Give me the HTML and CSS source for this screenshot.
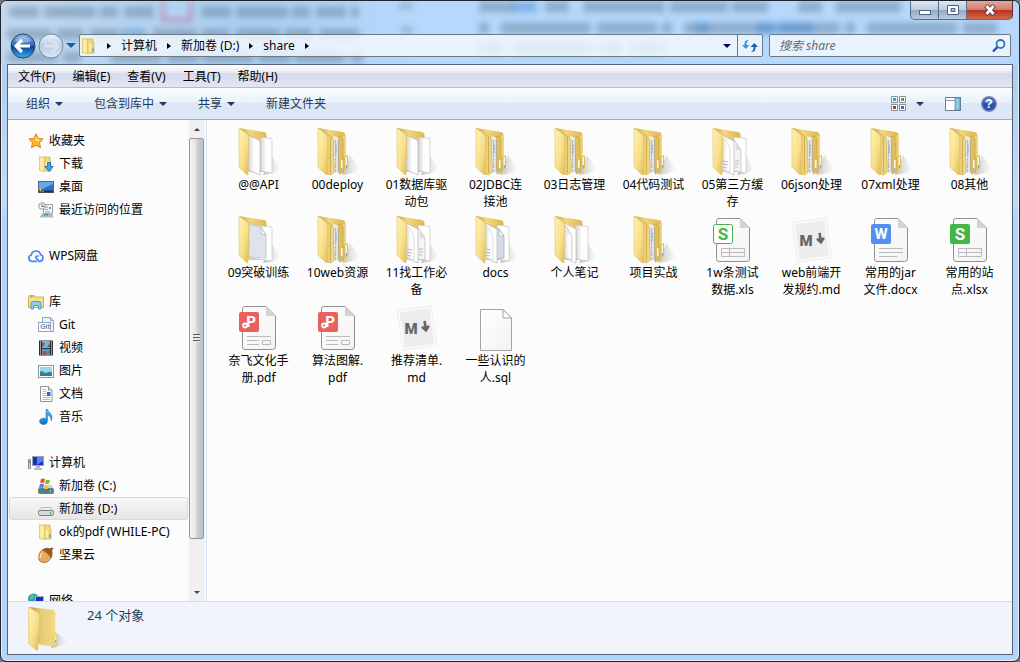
FILE: index.html
```html
<!DOCTYPE html>
<html lang="zh-CN">
<head>
    <meta charset="UTF-8">
    <meta name="viewport" content="width=device-width, initial-scale=1.0">
    <title>share</title>
    <link rel="stylesheet" href="styles.css">
</head>
<body>
<svg class="defs" aria-hidden="true">
    <defs>
        <linearGradient id="gold" x1="0" y1="0" x2="1" y2="1">
            <stop offset="0" stop-color="#fff3b8"/><stop offset=".55" stop-color="#f8e08a"/><stop offset="1" stop-color="#e3b94d"/>
        </linearGradient>
        <linearGradient id="gold-dark" x1="0" y1="0" x2="1" y2="0">
            <stop offset="0" stop-color="#c9a548"/><stop offset=".4" stop-color="#f2d77c"/><stop offset="1" stop-color="#dcb850"/>
        </linearGradient>
        <linearGradient id="gold-soft" x1="0" y1="0" x2="1" y2="0">
            <stop offset="0" stop-color="#b8975a"/><stop offset=".45" stop-color="#e6cb7a"/><stop offset="1" stop-color="#f5dc82"/>
        </linearGradient>
        <linearGradient id="paper" x1="0" y1="0" x2="1" y2="0">
            <stop offset="0" stop-color="#d0d0d0"/><stop offset=".5" stop-color="#fdfdfd"/><stop offset="1" stop-color="#fff"/>
        </linearGradient>
        <linearGradient id="shade" x1="0" y1="0" x2="1" y2="0">
            <stop offset="0" stop-color="#888" stop-opacity=".5"/><stop offset="1" stop-color="#aaa" stop-opacity="0"/>
        </linearGradient>
        <linearGradient id="sheet" x1="0" y1="0" x2="1" y2="1">
            <stop offset="0" stop-color="#fff"/><stop offset="1" stop-color="#f2f2f2"/>
        </linearGradient>
        <linearGradient id="blue" x1="0" y1="0" x2="0" y2="1">
            <stop offset="0" stop-color="#5fc2f2"/><stop offset="1" stop-color="#0f6fc4"/>
        </linearGradient>
        <linearGradient id="orb" x1="0" y1="0" x2="0" y2="1">
            <stop offset="0" stop-color="#8fb3e4"/><stop offset=".48" stop-color="#2f66b8"/><stop offset=".5" stop-color="#0b3a94"/><stop offset="1" stop-color="#35b4f4"/>
        </linearGradient>
        <linearGradient id="orb-off" x1="0" y1="0" x2="0" y2="1">
            <stop offset="0" stop-color="#eef4fb"/><stop offset=".5" stop-color="#b9cce2"/><stop offset="1" stop-color="#dce9f8"/>
        </linearGradient>
        <linearGradient id="glass-left" x1="0" y1="0" x2="1" y2="0">
            <stop offset="0" stop-color="#c3d9f1"/><stop offset=".6" stop-color="#abcff3"/><stop offset="1" stop-color="#b5d8fc"/>
        </linearGradient>
        <filter id="soft" x="-5%" y="-50%" width="110%" height="200%"><feGaussianBlur stdDeviation="3"/></filter>
    </defs>

    <!-- folders, 48x48 -->
    <symbol id="folder-back" viewBox="0 0 48 48">
        <path d="M28 47 L36 27 L46 41 Q40 46 28 47Z" fill="url(#shade)"/>
        <path d="M4 0 L29 4 Q31.500 4.500 31.500 7 L31.500 44 L12 44 L4 38Z" fill="url(#gold-dark)"/>
    </symbol>
    <symbol id="folder-flap" viewBox="0 0 48 48">
        <path d="M4 0 L12 6 Q13.500 7 13.500 10 L13.500 28 Q15 30 13 32 L13 47 L11 46 L4 39Z" fill="url(#gold)" stroke="#e2c265" stroke-width=".6"/>
    </symbol>
    <symbol id="folder-full" viewBox="0 0 48 48">
        <use href="#folder-back"/>
        <path d="M28 8 L31.500 7 V28 L34 27 V41 L30 45 H28Z" fill="#edd276"/>
        <path d="M24 9 L27.500 8 L29 11 V29 L30 30 V44 L25 46Z" fill="#dfbf5b" stroke="#b99434" stroke-width=".5"/>
        <path d="M19 8 L24.500 10 V45 L18 46Z" fill="#eceef0"/>
        <path d="M21.500 12 V44" stroke="#b4bbc1" stroke-width="1.500" stroke-dasharray="6 1 3 1"/>
        <path d="M22 17 V25" stroke="#7fa9bf"/>
        <path d="M24.300 11 V44" stroke="#a9a08a" stroke-width=".8"/>
        <path d="M9 4 L18 9 Q19.500 10 19.500 13 V30 L20 32 V44 L17 47 L13 46Z" fill="url(#gold-soft)" stroke="#c19a3a" stroke-width=".5"/>
        <path d="M16.500 9 V45" stroke="#c9a548" stroke-width=".8"/>
        <path d="M26.500 31.500 h2.500 v11 l-2.500 2z M31 28.500 h2.500 v11 l-2.500 2z" fill="#fff8df" stroke="#d9b44c" stroke-width=".8"/>
        <path d="M27.800 40 v3 M32.300 37 v3" stroke="#6aa9e8" stroke-width="1.200"/>
        <use href="#folder-flap"/>
    </symbol>
    <symbol id="folder-blank" viewBox="0 0 48 48">
        <use href="#folder-back"/>
        <path d="M25 9 L37 10.500 V45 L25 43Z" fill="url(#paper)" stroke="#c4c4c4" stroke-width=".7"/>
        <path d="M13 7 L24 12 Q25 13 25 15 V47 L13 42Z" fill="url(#paper)" stroke="#b5b5b5" stroke-width=".7"/>
        <use href="#folder-flap"/>
    </symbol>
    <symbol id="folder-memo" viewBox="0 0 48 48">
        <use href="#folder-back"/>
        <path d="M24 9 L37 10.500 V45 L25 43Z" fill="url(#paper)" stroke="#c4c4c4" stroke-width=".7"/>
        <path d="M13 7 L25 13 V47 L13 42Z" fill="#fff" stroke="#b5b5b5" stroke-width=".7"/>
        <path d="M13 9 L16 11 L21 20 V44 L13 41Z" fill="url(#paper)" stroke="#b5b5b5" stroke-width=".7"/>
        <path d="M16 11 V17 L21 20Z" fill="#e2e2e2"/>
        <use href="#folder-flap"/>
    </symbol>
    <symbol id="folder-notes" viewBox="0 0 48 48">
        <use href="#folder-back"/>
        <path d="M25 9 L37 10.500 V45 L25 43Z" fill="#fff" stroke="#c4c4c4" stroke-width=".7"/>
        <path d="M24 11 L27 14 L32 22 V44 L24 43Z" fill="#f4f4f4" stroke="#b9b9b9" stroke-width=".7"/>
        <path d="M27 14 V22 L32 23Z" fill="#ddd"/>
        <path d="M26 33 h4 M26 36 h4 M26 39 h3" stroke="#aaa" stroke-width=".8"/>
        <path d="M13 7 L25 13 V47 L13 42Z" fill="#fff" stroke="#b5b5b5" stroke-width=".7"/>
        <path d="M13 9 L17 12 L21 20 V44 L13 41Z" fill="url(#paper)" stroke="#c4c4c4" stroke-width=".6"/>
        <path d="M14 33 l5 1 M14 36 l5 1 M14 39 l4 1" stroke="#aaa" stroke-width=".8"/>
        <use href="#folder-flap"/>
    </symbol>
    <symbol id="folder-docs" viewBox="0 0 48 48">
        <use href="#folder-back"/>
        <path d="M25 9 L37 10.500 V45 L25 43Z" fill="#fff" stroke="#c4c4c4" stroke-width=".7"/>
        <path d="M24 11 L27 13 L32 20 V42 L24 43Z" fill="#d5dbe6" stroke="#9ba4b4" stroke-width=".7"/>
        <path d="M27 13 V20 H32Z" fill="#f7f7f7" stroke="#999" stroke-width=".5"/>
        <path d="M13 7 L25 13 V47 L13 42Z" fill="#fff" stroke="#b5b5b5" stroke-width=".7"/>
        <path d="M13 9 L17 12 L21 20 V44 L13 41Z" fill="url(#paper)" stroke="#c4c4c4" stroke-width=".6"/>
        <path d="M14 33 l5 1 M14 36 l5 1 M14 39 l4 1" stroke="#aaa" stroke-width=".8"/>
        <use href="#folder-flap"/>
    </symbol>
    <symbol id="folder-page" viewBox="0 0 48 48">
        <use href="#folder-back"/>
        <path d="M16 9 L37 11 V45 L16 42Z" fill="#fff" stroke="#c4c4c4" stroke-width=".7"/>
        <path d="M14 8 L26 11 L31 19 V42 L14 41Z" fill="#dfe4ec" stroke="#b4bac4" stroke-width=".7"/>
        <path d="M26 11 L26 18 L31 19Z" fill="#f7f7f7" stroke="#aaa" stroke-width=".6"/>
        <use href="#folder-flap"/>
    </symbol>
    <symbol id="folder-plain" viewBox="0 0 48 48">
        <path d="M28 45 L33 27 L47 37 Q38 44 28 45Z" fill="url(#shade)"/>
        <path d="M4 0 L31 3 Q33 4 33 6 V28 L35 29 V40 L31 43 L15 41Z" fill="url(#gold-soft)"/>
        <path d="M31 31 q2.500-2 4 0 v9 l-3 3z" fill="#f7e7a5" stroke="#d8b048" stroke-width=".7"/>
        <path d="M33.500 36 v3" stroke="#58a4e4" stroke-width="1.300"/>
        <path d="M4 0 L14 6 Q16 7 16 10 V30 L14 32 V47 L12 47 L4 40Z" fill="url(#gold)" stroke="#dcb953" stroke-width=".6"/>
    </symbol>

    <!-- documents, 48x48 -->
    <symbol id="doc-sheet" viewBox="0 0 48 48">
        <path d="M10 2.500 H31 L40.500 12 V42.500 Q40.500 45.500 37.500 45.500 H10 Q7.500 45.500 7.500 42.500 V5 Q7.500 2.500 10 2.500Z" fill="url(#sheet)" stroke="#909090"/>
        <path d="M31 2.500 V12 H40.500Z" fill="#d3d3d3"/>
    </symbol>
    <symbol id="doc-table" viewBox="0 0 48 48">
        <path d="M12.500 32.500 h23 v8 h-23z M12.500 36.500 h23 M20.500 32.500 v8" fill="none" stroke="#bbb"/>
    </symbol>
    <symbol id="file-xls" viewBox="0 0 48 48">
        <use href="#doc-sheet"/><use href="#doc-table"/>
        <rect x="4.500" y="8.500" width="19" height="19" rx="2" fill="#fff" stroke="#45b449"/>
    </symbol>
    <symbol id="file-xlsx" viewBox="0 0 48 48">
        <use href="#doc-sheet"/><use href="#doc-table"/>
        <rect x="4" y="8" width="20" height="20" rx="2" fill="#45b449"/>
    </symbol>
    <symbol id="file-docx" viewBox="0 0 48 48">
        <use href="#doc-sheet"/>
        <path d="M12 32.500 h24 M12 36.500 h24 M12 40.500 h18" stroke="#bbb"/>
        <rect x="4" y="8" width="20" height="20" rx="2" fill="#5490f0"/>
    </symbol>
    <symbol id="file-pdf" viewBox="0 0 48 48">
        <use href="#doc-sheet"/>
        <path d="M12 32.500 h24 M12 36.500 h12 M12 40.500 h12 M27.500 36.500 h8 v4 h-8z" fill="none" stroke="#bbb"/>
        <rect x="4" y="8" width="20" height="20" rx="2" fill="#ec5f5f"/>
        <circle cx="10" cy="21.500" r="2" fill="none" stroke="#fff" stroke-width="1.800"/>
    </symbol>
    <symbol id="file-md" viewBox="0 0 48 48">
        <g transform="rotate(-8 24 24)">
            <rect x="7" y="4" width="34" height="40" fill="#fdfdfd" stroke="#ececec"/>
            <rect x="9" y="6" width="30" height="36" fill="#ededed"/>
            <path d="M32.500 18 v9 M29 23.500 L32.500 27.500 L36 23.500" fill="none" stroke="#666" stroke-width="2.600"/>
        </g>
    </symbol>
    <symbol id="file-blank" viewBox="0 0 48 48">
        <path d="M8.500 5.500 H31 L39.500 14 V46.500 H8.500Z" fill="url(#sheet)" stroke="#a3a3a3"/>
        <path d="M31 5.500 V14 H39.500Z" fill="#fff" stroke="#a3a3a3"/>
    </symbol>

    <!-- small icons, 16x16 -->
    <symbol id="i-folder" viewBox="0 0 16 16">
        <path d="M5 1 h7 v4 h1 v10 h-8z" fill="#f0d77c" stroke="#cfae4b" stroke-width=".7"/>
        <path d="M1.500 .5 L6.500 1.500 V15.500 L1.500 14.500Z" fill="#fbeca0" stroke="#d9ba57" stroke-width=".7"/>
        <path d="M9 6 v8" stroke="#fff5c4" stroke-width="1.500"/>
        <path d="M12 10.500 v3" stroke="#4199e0" stroke-width="1.400"/>
    </symbol>
    <symbol id="i-star" viewBox="0 0 16 16">
        <path d="M8 .8 L10.100 5.400 L15.200 6 L11.500 9.500 L12.600 14.800 L8 12.200 L3.400 14.800 L4.500 9.500 L.8 6 L5.900 5.400Z" fill="#fdb62f" stroke="#dd8117"/>
        <path d="M8 2.800 L9.300 6.300 L13 6.700 L8 8.500Z" fill="#ffe48f"/>
    </symbol>
    <symbol id="i-download" viewBox="0 0 16 16">
        <use href="#i-folder"/>
        <path d="M9.500 6.500 h3 v4 h2.800 L11 15.500 L6.700 10.500 h2.800z" fill="#3aa4ea" stroke="#1766ad" stroke-width=".8"/>
    </symbol>
    <symbol id="i-desktop" viewBox="0 0 16 16">
        <rect x=".5" y="2.500" width="15" height="11" fill="#2f71cf" stroke="#5c6572"/>
        <path d="M1 3 h14 v2 L2 11 H1z" fill="#6aa8ee"/>
        <path d="M1 12.500 h14" stroke="#243048" stroke-width="2"/>
        <path d="M2.500 9.500 v3 M4.500 12.500 h1" stroke="#f3d24c" stroke-width="1.300"/>
    </symbol>
    <symbol id="i-recent" viewBox="0 0 16 16">
        <path d="M5.500 2.500 h9 v9 h-9z" fill="#f2f5f8" stroke="#9aa3aa"/>
        <path d="M7 5 h3 M7 7.500 h3 M7 10 h5" stroke="#8fa2b1"/>
        <path d="M11 5 h2 v2 h-2z" fill="#55a6e2"/>
        <path d="M2 15.500 l1.500-4 h11 l1 4z" fill="#b4b8ba"/>
        <path d="M6 12 h4 v1.500 h-4z" fill="#4c93a8"/>
        <circle cx="4" cy="4" r="3.300" fill="#f5f5f5" stroke="#91979c"/>
        <path d="M4 2 v2.500 h2" fill="none" stroke="#667"/>
    </symbol>
    <symbol id="i-cloud" viewBox="0 0 16 16">
        <path d="M9 13.300 H4 A3.200 3.200 0 0 1 3.300 7 A4.700 4.700 0 0 1 12.500 6.500 A3.500 3.500 0 0 1 12 13.300 H11 L7.700 9.300 A1.900 1.900 0 0 1 10.800 8.500" fill="none" stroke="#4786f5" stroke-width="1.700"/>
    </symbol>
    <symbol id="i-library" viewBox="0 0 16 16">
        <path d="M.5 2.500 q0-1 1-1 h4.500 l1 1.500 h8.500 v10.500 h-15z" fill="#f6df85" stroke="#cfae4b"/>
        <path d="M2 2.800 h3" stroke="#49b849"/>
        <path d="M3 15 V9.500 Q3 7.500 5 7.500 H11 Q13 7.500 13 9.500 V15 H10.500 V11.500 H5.500 V15Z" fill="#86d0f0" stroke="#3690c2" stroke-width=".8"/>
    </symbol>
    <symbol id="i-git" viewBox="0 0 16 16">
        <path d="M4.500 .5 h8 l3 3 v11 h-11z" fill="#eef3f9" stroke="#8ea4bd"/>
        <path d="M12.500 .5 v3 h3" fill="none" stroke="#8ea4bd"/>
        <rect x=".5" y="5.500" width="12" height="9" fill="#fff" stroke="#8ea4bd"/>
    </symbol>
    <symbol id="i-video" viewBox="0 0 16 16">
        <rect x="1" y=".5" width="14" height="15" fill="#273238"/>
        <rect x="4" y="1" width="8" height="7" fill="#70b5df"/><rect x="4" y="9" width="8" height="6" fill="#4b96cb"/>
        <path d="M4 2 l3 1.500 l-2 3.500 h-1z M12 3 v4 h-3z M4 15 l2-4 l3 1 l-1 3z M12 10 l-2 2 2 2z" fill="#a9552f"/>
        <path d="M2.500 1.500 v13 M13.500 1.500 v13" stroke="#fff" stroke-width="1" stroke-dasharray="1 1"/>
    </symbol>
    <symbol id="i-picture" viewBox="0 0 16 16">
        <rect x=".5" y="2.500" width="15" height="12" fill="#fff" stroke="#8d9399"/>
        <rect x="2" y="4" width="12" height="9" fill="#9bd7f2"/>
        <path d="M2 8 q3 0 6 2 q3-2 6-1 v3 h-12z" fill="#39926a"/>
        <path d="M2 11 h12 v2 h-12z" fill="#257eb6"/>
    </symbol>
    <symbol id="i-document" viewBox="0 0 16 16">
        <path d="M2.500 .5 h8 l3.500 3.500 v11.500 h-11.500z" fill="#fff" stroke="#8d9399"/>
        <path d="M10.500 .5 v3.500 h3.500" fill="#e5e8ec" stroke="#8d9399"/>
        <path d="M4.500 3.500 h4 M4.500 5.500 h4 M4.500 7.500 h4 M4.500 9.500 h4 M4.500 11.500 h7.500 M4.500 13.500 h7.500" stroke="#a9bfdc"/>
        <rect x="9" y="6" width="3.500" height="4" fill="#2f6fba"/>
    </symbol>
    <symbol id="i-music" viewBox="0 0 16 16">
        <path d="M8 0 h1.500 q.5 2.500 3 4.500 q3 3 .5 7.500 q.5-4.500-3.500-6 v6.500 a4 3.200 0 1 1-1.500-2.700z" fill="url(#blue)" stroke="#1c7ac0" stroke-width=".5"/>
    </symbol>
    <symbol id="i-computer" viewBox="0 0 16 16">
        <path d="M.5 4.500 h2 v9 h-2z" fill="#d4d8dc" stroke="#858c94"/>
        <path d="M1.500 6 v2" stroke="#3fbd46"/>
        <rect x="4.500" y="1.500" width="11" height="9" fill="#1c2fc0" stroke="#9aa3ac"/>
        <path d="M9 2 h6 v4 l-6 4z" fill="#5b82ec"/>
        <path d="M8 11 h4 v2 h2 v2 h-8 v-2 h2z" fill="#b5bbc1"/>
    </symbol>
    <symbol id="i-drive-c" viewBox="0 0 16 16">
        <path d="M2 7 h12 l1.500 4 h-15z" fill="#c6d3d9"/>
        <rect x=".5" y="10.500" width="15" height="5" rx="1" fill="#4e7d8d" stroke="#6d7c85"/>
        <path d="M12.500 12 v2.500" stroke="#63e066" stroke-width="1.500"/>
        <path d="M3 1 q2-1 4 0 l-1 4 q-2-1-4 0z" fill="#e85125"/>
        <path d="M8 1.500 q2 1 4 0 l-1 4 q-2 1-4 0z" fill="#78b93c"/>
        <path d="M2 6 q2-1 4 0 l-1 4 q-2-1-4 0z" fill="#3f8fdc"/>
        <path d="M7 6.500 q2 1 4 0 l-1 4 q-2 1-4 0z" fill="#f9c338"/>
    </symbol>
    <symbol id="i-drive" viewBox="0 0 16 16">
        <path d="M3 6.500 h10 l2.500 4 h-15z" fill="#ececee" stroke="#a5a8ab" stroke-width=".7"/>
        <rect x=".5" y="9.500" width="15" height="5" rx="2" fill="#d9dbdd" stroke="#777c80"/>
        <path d="M12.500 11 v2.500" stroke="#3ec341" stroke-width="1.600"/>
    </symbol>
    <symbol id="i-nut" viewBox="0 0 16 16">
        <path d="M1 13 q-1.500-8 5-11 l7 8 q-2 6-7 5.500 q-4 0-5-2.500z" fill="#e8a860" stroke="#9b5a20" stroke-width=".7"/>
        <path d="M4 3 q4-3.500 8-1.500 l2-1 1.500 1 -1.500 2 q1.500 4-1 8 q-3-6-9-8.500z" fill="#9a5a27"/>
        <path d="M4 6 q-2 3-1.500 5" fill="none" stroke="#ffe0a8" stroke-width="1.500"/>
    </symbol>
    <symbol id="i-network" viewBox="0 0 16 16">
        <circle cx="5.500" cy="6" r="5.500" fill="#2b95d6"/>
        <path d="M2 3 q3-3 5 0 l-2 3 -3 1z M5 8 l3 0 -1 3z" fill="#57c45a"/>
        <rect x="7.500" y="3.500" width="8" height="7" fill="#1c2fc0" stroke="#9fb2cc"/>
        <path d="M9 13 h5" stroke="#9fa6ad" stroke-width="2"/>
    </symbol>
    <symbol id="i-back" viewBox="0 0 26 26">
        <circle cx="13" cy="13" r="12" fill="url(#orb)" stroke="#26436f"/>
        <path d="M5 8 a9.500 9.500 0 0 1 16 0 q-8 4-16 0z" fill="#fff" opacity=".3"/>
        <path d="M12 7 L6 13 L12 19 M7 13 H20" fill="none" stroke="#fff" stroke-width="3.200"/>
    </symbol>
    <symbol id="i-forward" viewBox="0 0 26 26">
        <circle cx="13" cy="13" r="12" fill="url(#orb-off)" stroke="#7489a3"/>
        <path d="M14 7 L20 13 L14 19 M19 13 H6" fill="none" stroke="#d5e2ef" stroke-width="3"/>
    </symbol>
    <symbol id="i-refresh" viewBox="0 0 16 16">
        <path d="M7 2.500 Q4.500 3 4.500 6 V7 H7.500 L3.700 11 L0 7 H2.500 V6 Q2.500 1.500 7 2.500Z" fill="#3a93dc"/>
        <path d="M9 13.500 Q11.500 13 11.500 10 V9 H8.500 L12.300 5 L16 9 H13.500 V10 Q13.500 14.500 9 13.500Z" fill="#1f5fae"/>
    </symbol>
    <symbol id="i-search" viewBox="0 0 16 16">
        <circle cx="9.500" cy="6" r="4" fill="#eaf5ff" stroke="#2f74c4" stroke-width="1.800"/>
        <path d="M6.500 9 L2 13.500" stroke="#2d4f9c" stroke-width="2.400"/>
    </symbol>
    <symbol id="i-views" viewBox="0 0 16 16">
        <path d="M.5 .5 h6 v6 h-6z M8.500 .5 h6 v6 h-6z M.5 8.500 h6 v6 h-6z M8.500 8.500 h6 v6 h-6z" fill="#fff" stroke="#82909f"/>
        <path d="M2 2 h3 v3 h-3z" fill="#3ba4a8"/><path d="M10 2 h3 v3 h-3z" fill="#7cae35"/>
        <path d="M12 2 h1 v2 h-1z" fill="#dc3b26"/><path d="M2 10 h3 v3 h-3z" fill="#b73d22"/>
        <path d="M10 10 h3 v3 h-3z" fill="#386fb3"/>
    </symbol>
    <symbol id="i-pane" viewBox="0 0 16 16">
        <rect x=".5" y="1.500" width="15" height="13" fill="#fff" stroke="#6c7f94"/>
        <path d="M1 4.500 h9" stroke="#8799ab"/>
        <rect x="10" y="2" width="5" height="12" fill="#8acbe4" stroke="#5182a2" stroke-width=".8"/>
    </symbol>
    <symbol id="i-help" viewBox="0 0 16 16">
        <circle cx="8" cy="8" r="7.300" fill="#2a50b8" stroke="#858f9d" stroke-width="1.400"/>
        <path d="M2.500 6 a6 6 0 0 1 11 0 q-5 3-11 0z" fill="#fff" opacity=".3"/>
    </symbol>
</svg>

<div class="window">
    <!-- page behind the glass -->
    <svg class="glass" aria-hidden="true">
        <rect width="100%" height="64" fill="#b5d8fc"/>
        <rect width="420" height="64" fill="url(#glass-left)"/>
        <g filter="url(#soft)" stroke="#5f7890" stroke-opacity=".45" stroke-width="11" fill="none">
            <path d="M8 11 H155 M200 11 H358" stroke-dasharray="30 5 52 4 18 6"/>
            <path d="M6 33 H118 M152 33 H358" stroke-dasharray="44 5 27 7"/>
            <path d="M6 56 H80 M110 56 H362" stroke-dasharray="50 6 32 4"/>
            <path d="M398 5 H412 M400 29 H412" stroke-width="5"/>
            <path d="M478 6 H900" stroke-dasharray="36 30 24 14 82 5 58 4"/>
            <path d="M478 27 H996" stroke-dasharray="10 12 90 6 60 5"/>
            <path d="M478 47 H664" stroke-dasharray="24 9 80 5"/>
            <path d="M120 33 H145 M512 6 H536 M694 27 H708 M755 27 H812" stroke="#3e86cf"/>
            <path d="M162 0 V19 H190 V0" stroke="#c04a70" stroke-width="4"/>
        </g>
    </svg>

    <header class="titlebar">
        <div class="window-controls">
            <button class="control minimize" aria-label="最小化"><svg viewBox="0 0 14 12"><rect x="1.500" y="6.500" width="11" height="4" fill="#fff" stroke="#50617a"/></svg></button>
            <button class="control maximize" aria-label="最大化"><svg viewBox="0 0 14 12"><path d="M1.500 1.500 h11 v9 h-11z M5 4.500 v3 h4 v-3z" fill="#fff" stroke="#50617a" fill-rule="evenodd"/></svg></button>
            <button class="control close" aria-label="关闭"><svg viewBox="0 0 14 12"><path d="M3 1.500 L11 10.500 M11 1.500 L3 10.500" stroke="#5b3b42" stroke-width="4.600"/><path d="M3.500 2 L10.500 10 M10.500 2 L3.500 10" stroke="#fff" stroke-width="2.800"/></svg></button>
        </div>
        <div class="nav-row">
            <div class="history">
                <button aria-label="返回"><svg class="orb"><use href="#i-back"/></svg></button>
                <button aria-label="前进"><svg class="orb"><use href="#i-forward"/></svg></button>
                <button aria-label="最近的页面"><span class="caret caret-blue"></span></button>
            </div>
            <div class="address">
                <nav class="breadcrumb" aria-label="地址">
                    <svg class="icon"><use href="#i-folder"/></svg>
                    <span class="arrow"></span>
                    <a href="#">计算机</a>
                    <span class="arrow"></span>
                    <a href="#">新加卷 (D:)</a>
                    <span class="arrow"></span>
                    <a href="#">share</a>
                    <span class="arrow"></span>
                </nav>
                <button class="address-drop" aria-label="以前的位置"><span class="caret caret-navy"></span></button>
                <button class="refresh" aria-label="刷新"><svg class="icon"><use href="#i-refresh"/></svg></button>
            </div>
            <div class="search">
                <input type="text" placeholder="搜索 share" aria-label="搜索 share">
                <button aria-label="搜索"><svg class="icon"><use href="#i-search"/></svg></button>
            </div>
        </div>
    </header>

    <div class="client">
        <nav class="menubar" aria-label="菜单">
            <button>文件(F)</button>
            <button>编辑(E)</button>
            <button>查看(V)</button>
            <button>工具(T)</button>
            <button>帮助(H)</button>
        </nav>

        <div class="toolbar">
            <button>组织<span class="caret"></span></button>
            <button>包含到库中<span class="caret"></span></button>
            <button>共享<span class="caret"></span></button>
            <button>新建文件夹</button>
            <div class="toolbar-right">
                <button aria-label="更改视图"><svg class="icon"><use href="#i-views"/></svg></button>
                <button class="views-drop" aria-label="更多选项"><span class="caret"></span></button>
                <button class="pane-toggle" aria-label="显示预览窗格"><svg class="icon"><use href="#i-pane"/></svg></button>
                <button aria-label="获取帮助"><svg class="icon"><use href="#i-help"/><text x="8" y="12" class="help-letter">?</text></svg></button>
            </div>
        </div>

        <div class="body">
            <aside class="sidebar">
                <div class="tree">
                    <ul>
                        <li><a href="#"><svg class="icon"><use href="#i-star"/></svg>收藏夹</a></li>
                        <li class="child"><a href="#"><svg class="icon"><use href="#i-download"/></svg>下载</a></li>
                        <li class="child"><a href="#"><svg class="icon"><use href="#i-desktop"/></svg>桌面</a></li>
                        <li class="child"><a href="#"><svg class="icon"><use href="#i-recent"/></svg>最近访问的位置</a></li>
                    </ul>
                    <ul>
                        <li><a href="#"><svg class="icon"><use href="#i-cloud"/></svg>WPS网盘</a></li>
                    </ul>
                    <ul>
                        <li><a href="#"><svg class="icon"><use href="#i-library"/></svg>库</a></li>
                        <li class="child"><a href="#"><svg class="icon"><use href="#i-git"/><text x="7" y="12" class="git-letter">Git</text></svg>Git</a></li>
                        <li class="child"><a href="#"><svg class="icon"><use href="#i-video"/></svg>视频</a></li>
                        <li class="child"><a href="#"><svg class="icon"><use href="#i-picture"/></svg>图片</a></li>
                        <li class="child"><a href="#"><svg class="icon"><use href="#i-document"/></svg>文档</a></li>
                        <li class="child"><a href="#"><svg class="icon"><use href="#i-music"/></svg>音乐</a></li>
                    </ul>
                    <ul>
                        <li><a href="#"><svg class="icon"><use href="#i-computer"/></svg>计算机</a></li>
                        <li class="child"><a href="#"><svg class="icon"><use href="#i-drive-c"/></svg>新加卷 (C:)</a></li>
                        <li class="child"><a href="#" class="selected"><svg class="icon"><use href="#i-drive"/></svg>新加卷 (D:)</a></li>
                        <li class="child"><a href="#"><svg class="icon"><use href="#i-folder"/></svg>ok的pdf (WHILE-PC)</a></li>
                        <li class="child"><a href="#"><svg class="icon"><use href="#i-nut"/></svg>坚果云</a></li>
                    </ul>
                    <ul>
                        <li><a href="#"><svg class="icon"><use href="#i-network"/></svg>网络</a></li>
                    </ul>
                </div>
                <div class="scrollbar">
                    <button class="scroll-button" aria-label="向上滚动"><span class="caret-up"></span></button>
                    <div class="track"><div class="thumb"><span class="grip"></span></div></div>
                    <button class="scroll-button" aria-label="向下滚动"><span class="caret caret-small"></span></button>
                </div>
            </aside>

            <main class="files">
                <ul class="file-grid">
                    <li><a href="#"><svg><use href="#folder-blank"/></svg>@@API</a></li>
                    <li><a href="#"><svg><use href="#folder-full"/></svg>00deploy</a></li>
                    <li><a href="#"><svg><use href="#folder-blank"/></svg>01数据库驱<br>动包</a></li>
                    <li><a href="#"><svg><use href="#folder-full"/></svg>02JDBC连<br>接池</a></li>
                    <li><a href="#"><svg><use href="#folder-full"/></svg>03日志管理</a></li>
                    <li><a href="#"><svg><use href="#folder-full"/></svg>04代码测试</a></li>
                    <li><a href="#"><svg><use href="#folder-notes"/></svg>05第三方缓<br>存</a></li>
                    <li><a href="#"><svg><use href="#folder-full"/></svg>06json处理</a></li>
                    <li><a href="#"><svg><use href="#folder-full"/></svg>07xml处理</a></li>
                    <li><a href="#"><svg><use href="#folder-full"/></svg>08其他</a></li>
                    <li><a href="#"><svg><use href="#folder-page"/></svg>09突破训练</a></li>
                    <li><a href="#"><svg><use href="#folder-full"/></svg>10web资源</a></li>
                    <li><a href="#"><svg><use href="#folder-notes"/></svg>11找工作必<br>备</a></li>
                    <li><a href="#"><svg><use href="#folder-docs"/></svg>docs</a></li>
                    <li><a href="#"><svg><use href="#folder-memo"/></svg>个人笔记</a></li>
                    <li><a href="#"><svg><use href="#folder-full"/></svg>项目实战</a></li>
                    <li><a href="#"><svg><use href="#file-xls"/><text x="14" y="24" class="badge-letter badge-green">S</text></svg>1w条测试<br>数据.xls</a></li>
                    <li><a href="#"><svg><use href="#file-md"/><text x="18" y="30" class="md-letter">M</text></svg>web前端开<br>发规约.md</a></li>
                    <li><a href="#"><svg><use href="#file-docx"/><text x="14" y="23" class="badge-letter badge-wide">W</text></svg>常用的jar<br>文件.docx</a></li>
                    <li><a href="#"><svg><use href="#file-xlsx"/><text x="14" y="24" class="badge-letter">S</text></svg>常用的站<br>点.xlsx</a></li>
                    <li><a href="#"><svg><use href="#file-pdf"/><text x="16" y="23" class="badge-letter badge-wide">P</text></svg>奈飞文化手<br>册.pdf</a></li>
                    <li><a href="#"><svg><use href="#file-pdf"/><text x="16" y="23" class="badge-letter badge-wide">P</text></svg>算法图解.<br>pdf</a></li>
                    <li><a href="#"><svg><use href="#file-md"/><text x="18" y="30" class="md-letter">M</text></svg>推荐清单.<br>md</a></li>
                    <li><a href="#"><svg><use href="#file-blank"/></svg>一些认识的<br>人.sql</a></li>
                </ul>
            </main>
        </div>

        <footer class="details">
            <svg class="details-icon"><use href="#folder-plain"/></svg>
            <span>24 个对象</span>
        </footer>
    </div>
</div>
</body>
</html>
```

FILE: styles.css
```css
* {
    box-sizing: border-box;
}
body {
    margin: 0;
    background-color: #6f7780;
    font-family: "Noto Sans", "Noto Sans CJK SC", sans-serif;
    font-size: 12px;
    line-height: 17px;
    color: #000;
}
button {
    margin: 0;
    padding: 0;
    border: none;
    background: none;
    font: inherit;
    color: inherit;
}
a {
    color: inherit;
    text-decoration: none;
}
ul {
    margin: 0;
    padding: 0;
    list-style: none;
}
svg {
    display: block;
    flex: none;
}
.defs {
    position: absolute;
    width: 0;
    height: 0;
}
.icon {
    width: 16px;
    height: 16px;
}
.caret {
    display: block;
    border: 4px solid transparent;
    border-top-color: #1e395b;
    border-bottom: none;
}
.caret-blue {
    border-width: 5px;
    border-top-color: #1d5c9c;
}
.caret-navy {
    border-top-color: #000064;
}
.caret-small,
.caret-up {
    border: 3px solid transparent;
    border-top: 3px solid #444;
    border-bottom: none;
}
.caret-up {
    border-top: none;
    border-bottom: 3px solid #444;
}

/* window frame */
.window {
    position: relative;
    display: flex;
    flex-direction: column;
    height: 100vh;
    padding: 0 6px 6px;
    border: 1px solid #20242c;
    border-radius: 7px;
    overflow: hidden;
    background: linear-gradient(#a9c8ea, #c3dbf5 31%, #b3d6fb 32%, #b3d4f7);
    box-shadow: inset 0 0 0 1px #e2f1ff;
}
.glass {
    position: absolute;
    top: 0;
    left: 0;
    width: 100%;
    height: 64px;
}
.titlebar {
    position: relative;
    padding-bottom: 7px;
}
.window-controls {
    display: flex;
    justify-content: flex-end;
}
.control {
    display: flex;
    align-items: center;
    justify-content: center;
    width: 28px;
    height: 19px;
    border: 1px solid #5b6d84;
    border-top: none;
    border-right: none;
    background: linear-gradient(#dce8f5, #bccde0 48%, #92a9c3 50%, #b6cce4);
}
.control svg {
    width: 14px;
    height: 12px;
}
.minimize {
    border-bottom-left-radius: 5px;
}
.close {
    width: 47px;
    border-right: 1px solid #5b3038;
    border-bottom-right-radius: 5px;
    background: linear-gradient(#e5a99b, #d27d6c 48%, #b72f1c 50%, #d5694a);
}

/* address row */
.nav-row {
    display: flex;
    align-items: center;
    gap: 6px;
    height: 23px;
    margin-top: 14px;
    padding: 0 2px 0 3px;
}
.history {
    display: flex;
    align-items: center;
    gap: 2px;
    width: 63px;
}
.orb {
    width: 26px;
    height: 26px;
}
.address,
.search {
    display: flex;
    align-items: center;
    height: 23px;
    border: 1px solid #6b7886;
    border-radius: 2px;
    background-color: rgba(246, 250, 254, 0.8);
}
.address {
    flex: 1;
    min-width: 0;
}
.breadcrumb {
    display: flex;
    flex: 1;
    align-items: center;
    gap: 10px;
    padding-left: 1px;
    white-space: nowrap;
}
.arrow {
    border: 3px solid transparent;
    border-left: 4px solid #000;
    border-right: none;
}
.address-drop {
    padding: 0 6px;
}
.refresh {
    display: flex;
    align-items: center;
    justify-content: center;
    width: 25px;
    height: 21px;
    border-left: 1px solid #6b7886;
}
.search {
    width: 242px;
    padding: 0 3px 0 9px;
}
.search input {
    flex: 1;
    min-width: 0;
    padding: 0;
    border: none;
    outline: none;
    background: none;
    font: inherit;
    font-style: italic;
}
.search input::placeholder {
    color: #666c73;
}

/* client area */
.client {
    position: relative;
    display: flex;
    flex: 1;
    flex-direction: column;
    min-height: 0;
    border: 1px solid #53657c;
    background-color: #fcfcfc;
}
.menubar {
    display: flex;
    align-items: center;
    gap: 17px;
    height: 23px;
    padding-left: 10px;
    border-bottom: 1px solid #b6bcd0;
    background: linear-gradient(#fff, #e6e9f2 35%, #d5daec 36%, #e1e5f4);
}
.toolbar {
    display: flex;
    align-items: center;
    gap: 31px;
    height: 32px;
    padding: 0 15px 0 18px;
    border-bottom: 1px solid #a0afc3;
    background: linear-gradient(#fafdff, #e8f1fb 47%, #dce6f4 48%, #dde8f6);
    color: #1e395b;
}
.toolbar button {
    display: flex;
    align-items: center;
    gap: 5px;
}
.toolbar-right {
    display: flex;
    align-items: center;
    margin-left: auto;
}
.toolbar .views-drop {
    margin-left: 9px;
}
.toolbar .pane-toggle {
    margin: 0 20px 0 21px;
}
.body {
    display: flex;
    flex: 1;
    min-height: 0;
}

/* navigation pane */
.sidebar {
    display: flex;
    width: 199px;
    border-right: 1px solid #d6e5f5;
}
.tree {
    flex: 1;
    min-width: 0;
    padding: 9px 1px 0;
    overflow: hidden;
}
.tree ul {
    margin-bottom: 23px;
}
.tree a {
    display: flex;
    align-items: center;
    gap: 5px;
    height: 23px;
    padding-left: 18px;
    border: 1px solid transparent;
    border-radius: 3px;
    white-space: nowrap;
}
.tree .child a {
    padding-left: 28px;
}
.tree .selected {
    border-color: #d9d9d9;
    background: linear-gradient(#f8f8f8, #e6e6e6);
}
.scrollbar {
    display: flex;
    flex-direction: column;
    width: 16px;
    margin-right: 1px;
    background-color: #f0f0f0;
}
.scroll-button {
    display: flex;
    align-items: center;
    justify-content: center;
    height: 18px;
}
.track {
    flex: 1;
}
.thumb {
    display: flex;
    align-items: center;
    justify-content: center;
    width: 15px;
    height: 90%;
    border: 1px solid #979797;
    border-radius: 2px;
    background: linear-gradient(to right, #f5f5f5, #e4e4e6 45%, #cfcfd2 55%, #bfc0c4);
}
.grip {
    width: 7px;
    height: 8px;
    background: repeating-linear-gradient(#5c5c5c 0, #5c5c5c 1px, #e6e6e6 1px, #e6e6e6 3px);
}

/* file list */
.files {
    flex: 1;
    min-width: 0;
    padding: 8px 0 0 12px;
    overflow: hidden;
}
.file-grid {
    display: grid;
    grid-template-columns: repeat(auto-fill, 79px);
    grid-auto-rows: 88px;
}
.file-grid a {
    display: block;
    text-align: center;
    white-space: nowrap;
}
.file-grid svg {
    width: 48px;
    height: 48px;
    margin: 0 auto;
}

/* letters inside icons */
.badge-letter {
    font: bold 17px Roboto, sans-serif;
    text-anchor: middle;
    fill: #fff;
}
.badge-wide {
    font-size: 15px;
}
.badge-green {
    fill: #45b449;
}
.md-letter {
    font: 900 15px Roboto, sans-serif;
    text-anchor: middle;
    fill: #666;
}
.git-letter {
    font: bold 7px "Liberation Sans", sans-serif;
    text-anchor: middle;
    fill: #6e88a6;
}
.help-letter {
    font: bold 12px "Liberation Sans", sans-serif;
    text-anchor: middle;
    fill: #fff;
}

/* details pane */
.details {
    display: flex;
    gap: 18px;
    height: 53px;
    padding: 5px 17px 0;
    border-top: 1px solid #cfdfef;
    background-color: #f1f5fb;
    font-size: 13px;
    color: #1e395b;
}
.details-icon {
    width: 44px;
    height: 44px;
}
```
